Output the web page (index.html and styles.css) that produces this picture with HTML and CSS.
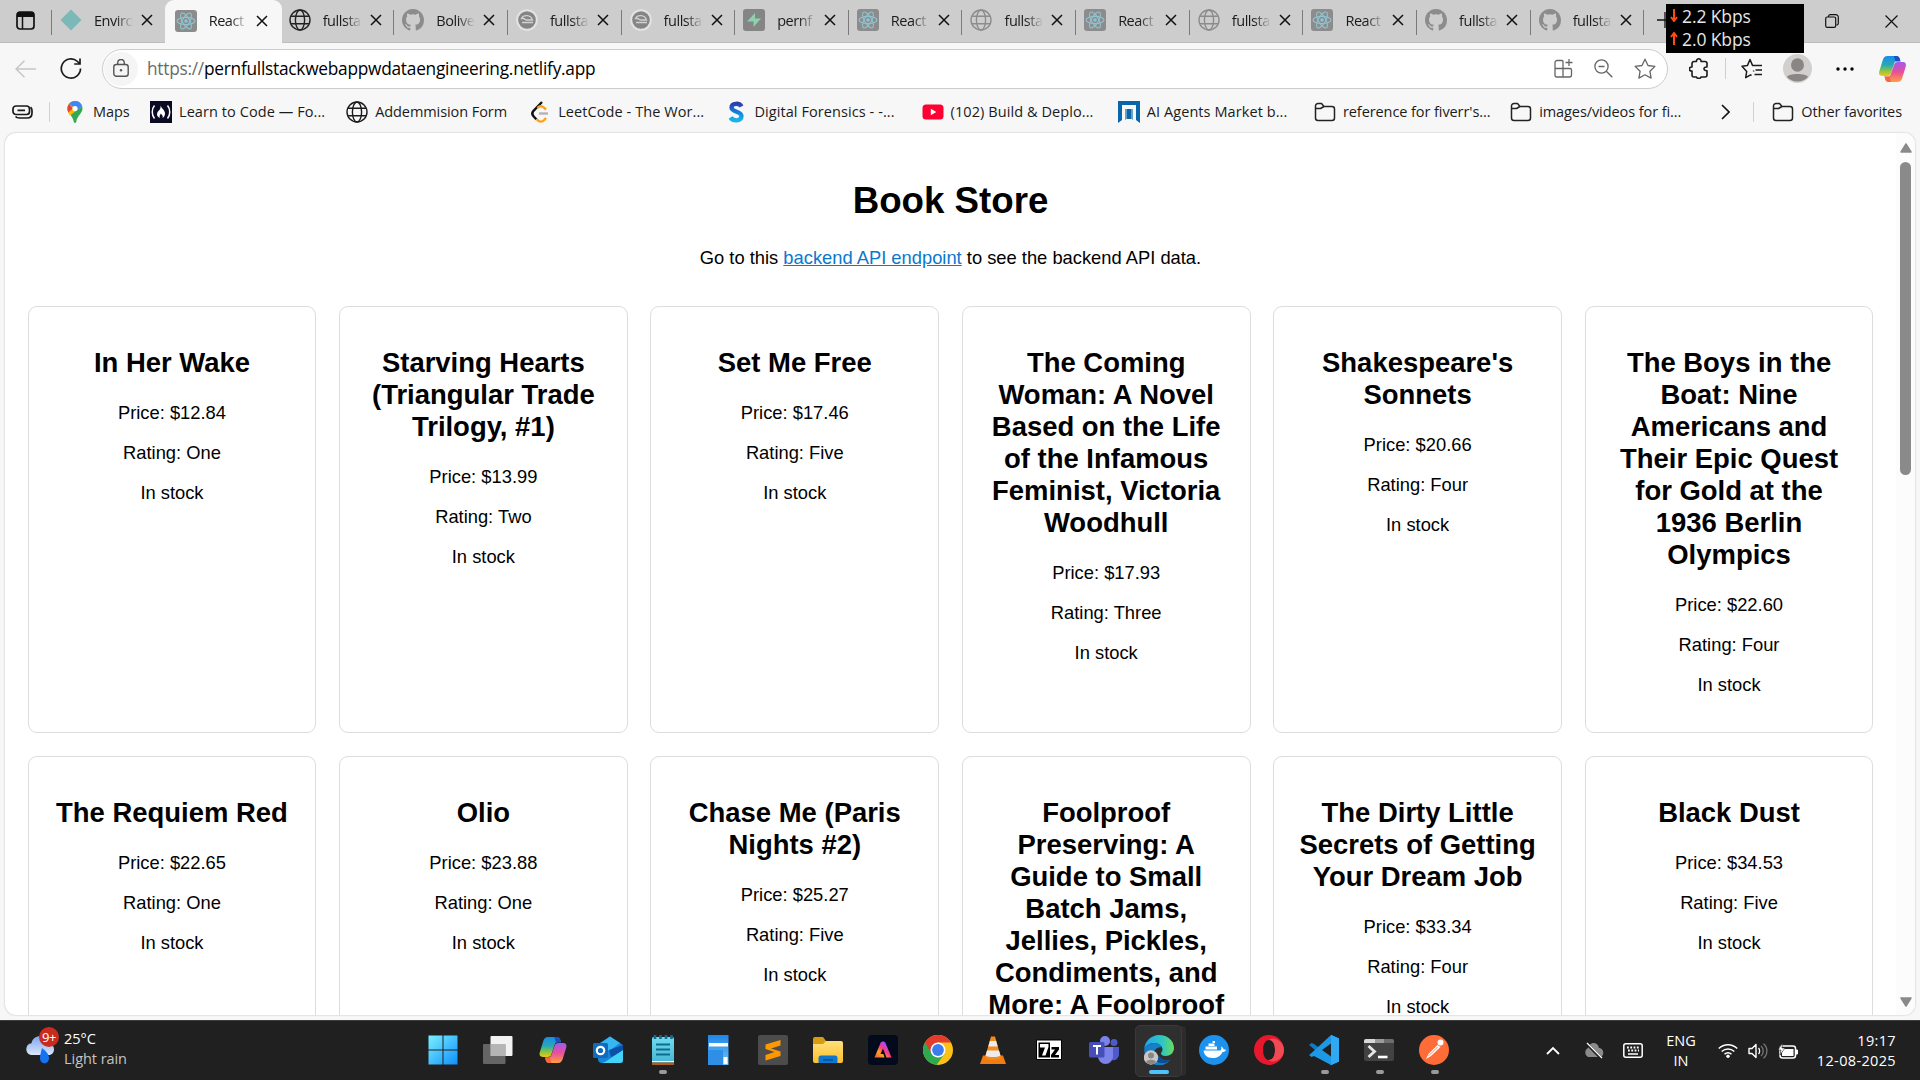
FILE: index.html
```html
<!DOCTYPE html>
<html lang="en">
<head>
<meta charset="utf-8">
<title>React App</title>
<link rel="stylesheet" href="styles.css">
</head>
<body>
<svg class="defs" width="0" height="0" aria-hidden="true">
  <defs>
    <linearGradient id="cpA" x1="0" y1="0" x2="0" y2="1"><stop offset="0" stop-color="#1a8bea"/><stop offset=".45" stop-color="#27a9b5"/><stop offset=".75" stop-color="#8cc63f"/><stop offset="1" stop-color="#f5c518"/></linearGradient>
    <linearGradient id="cpB" x1="0" y1="0" x2="0" y2="1"><stop offset="0" stop-color="#a259f0"/><stop offset=".5" stop-color="#e84f9a"/><stop offset="1" stop-color="#ffa03c"/></linearGradient>
    <linearGradient id="win" x1="0" y1="0" x2="1" y2="1"><stop offset="0" stop-color="#7af0ff"/><stop offset="1" stop-color="#0f8ffb"/></linearGradient>
    <linearGradient id="cloud" x1="0" y1="0" x2="0" y2="1"><stop offset="0" stop-color="#7fa6ec"/><stop offset="1" stop-color="#dbe6fa"/></linearGradient>
    <linearGradient id="sg" x1="0" y1="0" x2="0" y2="1"><stop offset="0" stop-color="#2b3fae"/><stop offset=".6" stop-color="#0d8ee0"/><stop offset="1" stop-color="#1bb4ea"/></linearGradient>
    <linearGradient id="fold" x1="0" y1="0" x2="0" y2="1"><stop offset="0" stop-color="#ffe07a"/><stop offset="1" stop-color="#fdbf2d"/></linearGradient>
    <linearGradient id="edgeA" x1="0" y1="0" x2="1" y2="0"><stop offset="0" stop-color="#24a3ee"/><stop offset=".6" stop-color="#2ec6c4"/><stop offset="1" stop-color="#6bdc5a"/></linearGradient>
    <linearGradient id="adobe" x1="0" y1="1" x2="1" y2="0"><stop offset="0" stop-color="#ff4a3d"/><stop offset=".3" stop-color="#f2a51f"/><stop offset=".5" stop-color="#ff3d7a"/><stop offset=".75" stop-color="#a04bff"/><stop offset="1" stop-color="#1fb5ff"/></linearGradient>
    <linearGradient id="calc" x1="0" y1="0" x2="0" y2="1"><stop offset="0" stop-color="#1f86e8"/><stop offset="1" stop-color="#6cc4fa"/></linearGradient>
    <linearGradient id="note" x1="0" y1="0" x2="0" y2="1"><stop offset="0" stop-color="#70dbf0"/><stop offset="1" stop-color="#43b3d3"/></linearGradient>
    <symbol id="react" viewBox="0 0 22 22"><rect width="22" height="22" rx="3" fill="#8c8c8c"/><g fill="none" stroke="#8fc3d0" stroke-width="1.1"><ellipse cx="11" cy="11" rx="9" ry="3.6"/><ellipse cx="11" cy="11" rx="9" ry="3.6" transform="rotate(60 11 11)"/><ellipse cx="11" cy="11" rx="9" ry="3.6" transform="rotate(120 11 11)"/></g><circle cx="11" cy="11" r="1.8" fill="#8fc3d0"/></symbol>
    <symbol id="globe" viewBox="0 0 22 22"><g fill="none" stroke="currentColor" stroke-width="1.4"><circle cx="11" cy="11" r="10"/><ellipse cx="11" cy="11" rx="4.6" ry="10"/><path d="M2 7.3h18M2 14.7h18"/></g></symbol>
    <symbol id="github" viewBox="0 0 16 16"><path fill="#8c8c8c" d="M8 0C3.58 0 0 3.58 0 8c0 3.54 2.29 6.53 5.47 7.59.4.07.55-.17.55-.38 0-.19-.01-.82-.01-1.49-2.01.37-2.53-.49-2.69-.94-.09-.23-.48-.94-.82-1.13-.28-.15-.68-.52-.01-.53.63-.01 1.08.58 1.23.82.72 1.21 1.87.87 2.33.66.07-.52.28-.87.51-1.07-1.78-.2-3.64-.89-3.64-3.95 0-.87.31-1.59.82-2.15-.08-.2-.36-1.02.08-2.12 0 0 .67-.21 2.2.82a7.6 7.6 0 0 1 4 0c1.53-1.04 2.2-.82 2.2-.82.44 1.1.16 1.92.08 2.12.51.56.82 1.27.82 2.15 0 3.07-1.87 3.75-3.65 3.95.29.25.54.73.54 1.48 0 1.07-.01 1.93-.01 2.2 0 .21.15.46.55.38A8 8 0 0 0 16 8c0-4.42-3.58-8-8-8"/></symbol>
    <symbol id="koyeb" viewBox="0 0 22 22"><circle cx="11" cy="11" r="9.800" fill="#858585" stroke="#e3e3e3" stroke-width="2"/><path d="M5.500 9.500c2-4 9-4 11 1.500h-6c-1.500 0-1.500-1.500-3-1.500zM6 13.500h11" stroke="#d2d2d2" stroke-width="1.300" fill="none"/></symbol>
    <symbol id="close" viewBox="0 0 12 12"><path d="M1 1l10 10M11 1L1 11" stroke="#111" stroke-width="1.5" fill="none"/></symbol>
    <symbol id="folder" viewBox="0 0 22 20"><path d="M1.5 5V4a2.5 2.5 0 0 1 2.500-2.500h3.500l2.500 3h8a2.500 2.500 0 0 1 2.500 2.500v9a2.500 2.500 0 0 1-2.500 2.500H4A2.500 2.500 0 0 1 1.500 16zM1.500 6.500h5L10 4.500" fill="none" stroke="#222" stroke-width="1.5" stroke-linejoin="round"/></symbol>
    <symbol id="copilot" viewBox="0 0 28 28"><path d="M9 1h9c2 0 2.800 1.400 3.300 3l.6 2h-3c-2 0-2.800 1-3.400 3l-3 9c-.8 2.400-1.800 3-4 3H4C1 21 0 19 .8 16.300L4.300 5C5.200 2.300 6.500 1 9 1z" fill="url(#cpA)"/><path d="M15 1h3c2 0 2.800 1.400 3.300 3l.7 2.500h-4c-2 0-2-5.500-3-5.500z" fill="#1c50c8"/><path d="M19 27h-9c-2 0-2.800-1.400-3.300-3L6 21.500h3c2 0 2.900-1 3.500-3l3-8.500c.8-2.400 1.800-3 4-3H24c3 0 4 2 3.200 4.700L23.700 23c-.9 2.700-2.200 4-4.700 4z" fill="url(#cpB)"/><path d="M13 27h-3c-2 0-2.800-1.400-3.300-3L6 21.500h4c2 0 2 5.500 3 5.500z" fill="#f26b3a"/></symbol>
  </defs>
</svg>

<div class="tabstrip">
  <div class="tab-actions"><svg width="19" height="19" viewBox="0 0 19 19"><rect x="1" y="1" width="17" height="17" rx="3" fill="none" stroke="#111" stroke-width="1.7"/><path d="M1 4a3 3 0 0 1 3-3h11a3 3 0 0 1 3 3v2H1z" fill="#111"/><path d="M6.500 6v12" stroke="#111" stroke-width="1.5"/></svg></div>
  <div class="tab sep"><svg class="fav" viewBox="0 0 22 22"><path d="M11 .5L21.500 11 11 21.500.5 11z" fill="#7cb8b8"/></svg><span class="tab-title">Enviro</span><svg class="x"><use href="#close"/></svg></div>
  <div class="tab active"><svg class="fav"><use href="#react"/></svg><span class="tab-title">React</span><svg class="x"><use href="#close"/></svg></div>
  <div class="tab dark"><svg class="fav"><use href="#globe"/></svg><span class="tab-title">fullsta</span><svg class="x"><use href="#close"/></svg></div>
  <div class="tab sep"><svg class="fav"><use href="#github"/></svg><span class="tab-title">Bolive</span><svg class="x"><use href="#close"/></svg></div>
  <div class="tab sep"><svg class="fav"><use href="#koyeb"/></svg><span class="tab-title">fullsta</span><svg class="x"><use href="#close"/></svg></div>
  <div class="tab sep"><svg class="fav"><use href="#koyeb"/></svg><span class="tab-title">fullsta</span><svg class="x"><use href="#close"/></svg></div>
  <div class="tab sep"><svg class="fav" viewBox="0 0 22 22"><rect width="22" height="22" rx="3" fill="#858585"/><path d="M12 4v5.500h6L10.500 18v-5.500H4z" fill="#8fd0ae"/></svg><span class="tab-title">pernf</span><svg class="x"><use href="#close"/></svg></div>
  <div class="tab sep"><svg class="fav"><use href="#react"/></svg><span class="tab-title">React</span><svg class="x"><use href="#close"/></svg></div>
  <div class="tab sep"><svg class="fav"><use href="#globe"/></svg><span class="tab-title">fullsta</span><svg class="x"><use href="#close"/></svg></div>
  <div class="tab sep"><svg class="fav"><use href="#react"/></svg><span class="tab-title">React</span><svg class="x"><use href="#close"/></svg></div>
  <div class="tab sep"><svg class="fav"><use href="#globe"/></svg><span class="tab-title">fullsta</span><svg class="x"><use href="#close"/></svg></div>
  <div class="tab sep"><svg class="fav"><use href="#react"/></svg><span class="tab-title">React</span><svg class="x"><use href="#close"/></svg></div>
  <div class="tab sep"><svg class="fav"><use href="#github"/></svg><span class="tab-title">fullsta</span><svg class="x"><use href="#close"/></svg></div>
  <div class="tab sep"><svg class="fav"><use href="#github"/></svg><span class="tab-title">fullsta</span><svg class="x"><use href="#close"/></svg></div>
  <div class="new-tab sep"><svg width="16" height="16" viewBox="0 0 16 16"><path d="M0 8h16M8 0v16" stroke="#111" stroke-width="1.3"/></svg></div>
  <div class="window-buttons">
    <svg width="14" height="14" viewBox="0 0 14 14"><path d="M3.500 3V2.500A2 2 0 0 1 5.500.7h5.300a2.500 2.500 0 0 1 2.500 2.500v6a2 2 0 0 1-1.800 2" fill="none" stroke="#111" stroke-width="1.2"/><rect x=".7" y="3" width="10" height="10.300" rx="1.600" fill="none" stroke="#111" stroke-width="1.2"/></svg>
    <svg width="13" height="13" viewBox="0 0 13 13"><path d="M.5.500l12 12M12.500.500l-12 12" stroke="#111" stroke-width="1.2"/></svg>
  </div>
</div>

<div class="netmeter">
  <div><svg width="8" height="13" viewBox="0 0 8 13"><path d="M4 0v11M1 8l3 4 3-4" fill="none" stroke="#ff4a10" stroke-width="2"/></svg><span>2.2 Kbps</span></div>
  <div><svg width="8" height="13" viewBox="0 0 8 13"><path d="M4 13V2M1 5l3-4 3 4" fill="none" stroke="#ff4a10" stroke-width="2"/></svg><span>2.0 Kbps</span></div>
</div>

<div class="toolbar">
  <svg class="back" width="21" height="18" viewBox="0 0 21 18"><path d="M9.500.7L1 9l8.500 8.300M1 9h20" fill="none" stroke="#c6c6c6" stroke-width="1.5"/></svg>
  <svg class="reload" width="22" height="21" viewBox="0 0 22 21"><path d="M20.500 10.500A9.600 9.600 0 1 1 17.500 3.500L20 6M20 .5V6h-5.800" fill="none" stroke="#1b1b1b" stroke-width="1.7"/></svg>
  <div class="address">
    <span class="lock"><svg width="16" height="18" viewBox="0 0 16 18"><rect x=".8" y="5.500" width="14.400" height="11.700" rx="2.500" fill="none" stroke="#555" stroke-width="1.400"/><path d="M4.700 5.500V3.800a3.300 3.300 0 0 1 6.600 0v1.700" fill="none" stroke="#555" stroke-width="1.400"/><circle cx="8" cy="11.300" r="1.200" fill="#555"/></svg></span>
    <span class="url"><span>https://</span>pernfullstackwebappwdataengineering.netlify.app</span>
    <svg width="19" height="19" viewBox="0 0 19 19"><path d="M8 1.500H3A2 2 0 0 0 1 3.500V16a2 2 0 0 0 2 2h12.500a2 2 0 0 0 2-2v-5a1.500 1.500 0 0 0-1.500-1.500H1M9 2v16M9 2.500a1 1 0 0 0-1-1M15 0v7M11.500 3.500h7" fill="none" stroke="#666" stroke-width="1.300"/></svg>
    <svg width="19" height="19" viewBox="0 0 19 19"><circle cx="7.500" cy="7.500" r="6.600" fill="none" stroke="#666" stroke-width="1.300"/><path d="M12.300 12.300l6 6M4.500 7.500h6" stroke="#666" stroke-width="1.400"/></svg>
    <svg width="22" height="21" viewBox="0 0 22 21"><path d="M11 1.200l3 6.300 6.900.9-5 4.800 1.200 6.900L11 16.800l-6.100 3.300 1.200-6.900-5-4.800 6.900-.9z" fill="none" stroke="#666" stroke-width="1.300" stroke-linejoin="round"/></svg>
  </div>
  <svg class="ext" width="20" height="21" viewBox="0 0 20 21"><path d="M5 3.500h2.500c-.4-3.600 4.900-3.600 4.500 0H16a2 2 0 0 1 2 2V9c-4-.4-4 4 0 3.800V17a2 2 0 0 1-2 2h-4c0 1.800-4.500 1.800-4.500 0H5a2 2 0 0 1-2-2v-4C-.5 13-.5 9 3 9V5.500a2 2 0 0 1 2-2z" fill="none" stroke="#1b1b1b" stroke-width="1.600" stroke-linejoin="round"/></svg>
  <i class="vline"></i>
  <svg class="favs" width="22" height="21" viewBox="0 0 22 21"><path d="M12.500 13.500l.2-1M10.500 17.500l-1-.6-4.800 2.800 1-6.200L1 8.300l5.500-.9L9 1.500l2.500 5.900H21M14.500 12h6.500M13.500 16.500H21" fill="none" stroke="#1b1b1b" stroke-width="1.500" stroke-linejoin="round"/></svg>
  <svg class="avatar" width="29" height="29" viewBox="0 0 29 29"><circle cx="14.500" cy="14.500" r="14.500" fill="#d2d0ce"/><ellipse cx="14.500" cy="11" rx="6.500" ry="6.800" fill="#8a8683"/><path d="M4 23c1-4 20-4 21 0a14.400 14.400 0 0 1-21 0z" fill="#8a8683"/></svg>
  <svg class="more" width="18" height="4" viewBox="0 0 18 4"><circle cx="2" cy="2" r="1.700"/><circle cx="9" cy="2" r="1.700"/><circle cx="16" cy="2" r="1.700"/></svg>
  <svg class="copilot" width="29" height="28"><use href="#copilot"/></svg>
</div>

<div class="bookmarks">
  <div class="bm-first"><svg width="21" height="14" viewBox="0 0 21 14"><path d="M4 1h10.500a3 3 0 0 1 3 3v2.500a3 3 0 0 1-3 3H4a3 3 0 0 1-3-3V4a3 3 0 0 1 3-3zM5.500 5.300h7.500M3.500 11.500c1 1.300 2 1.500 4 1.500H15c3.500 0 5-2 5-5V5.500c0-1.500-.5-2.500-1.500-3.300" fill="none" stroke="#1b1b1b" stroke-width="1.700"/></svg></div>
  <div class="bm maps"><svg class="bi" viewBox="0 0 22 22"><path d="M11 0a7.500 7.500 0 0 1 7.500 7.500c0 5-5.500 7-6.300 13.600-.2 1.200-2.200 1.200-2.400 0C9 14.500 3.500 12.500 3.500 7.500A7.500 7.500 0 0 1 11 0z" fill="#34a853"/><path d="M11 0a7.500 7.500 0 0 1 7.100 5.200L6 14.500c-1.500-2-2.500-4-2.500-7A7.500 7.500 0 0 1 11 0z" fill="#fbbc04"/><path d="M5.200 2.800L9 7.500l-4.700 4C2.800 8.500 3.300 5 5.200 2.800z" fill="#ea4335"/><path d="M5.200 2.800C8.500-1.500 16.500-.8 18.100 5.200L13 9z" fill="#4285f4"/><circle cx="11" cy="7.500" r="2.600" fill="#fff"/></svg><span>Maps</span></div>
  <div class="bm cut"><svg class="bi" viewBox="0 0 22 22"><rect width="22" height="22" fill="#0a0a23"/><path d="M4.500 4.500C1.500 8 1.500 14 4.500 17.500M17.500 4.500c3 3.500 3 9.500 0 13" fill="none" stroke="#fff" stroke-width="1.500"/><path d="M10.500 4.500c1 3 4.500 4.500 4.500 8 0 2-1 3.500-2.500 4.500 1-2.500-1-3-1.500-4.500-1 1.500-2 2.500-1 4.500C6 15.500 6.500 11.500 9 9.500c1.500-1.500 1.700-3 1.500-5z" fill="#fff"/></svg><span>Learn to Code — Fo...</span></div>
  <div class="bm globe"><svg class="bi"><use href="#globe"/></svg><span>Addemmision Form</span></div>
  <div class="bm cut"><svg class="bi" viewBox="0 0 22 22"><path d="M13 1L4.500 9.800c-1.800 2-1.800 3.500 0 5.500l3 3.200" fill="none" stroke="#111" stroke-width="2.400"/><path d="M8.500 7c2-2.200 4.500-2.300 6.500-.3l2 1.800M7.500 18c2.500 3.300 5.500 3.300 7.700 1l1.800-2" fill="none" stroke="#ffa116" stroke-width="2.400"/><path d="M10 12.500h9" stroke="#b3b3b3" stroke-width="2.400"/></svg><span>LeetCode - The Wor...</span></div>
  <div class="bm cut"><svg class="bi" viewBox="0 0 22 22"><path d="M16.500 5.500C14.500 1.500 6.500 2 6.500 6.500c0 5 10 3.500 10 8.500 0 5.500-8.500 5.500-11 1.500" fill="none" stroke="url(#sg)" stroke-width="4.300"/></svg><span>Digital Forensics - -...</span></div>
  <div class="bm cut"><svg class="bi" viewBox="0 0 22 22"><rect x=".5" y="3.500" width="21" height="15" rx="3.500" fill="#ff0033"/><path d="M8.800 7.800v6.400l5.500-3.200z" fill="#fff"/></svg><span>(102) Build &amp; Deplo...</span></div>
  <div class="bm cut"><svg class="bi" viewBox="0 0 22 22"><path d="M0 0h22v22l-4-3V4H4v15l-4 3zM9 8h4v10H9z" fill="#0a66a8"/><path d="M7 19V8h3v9zM12 8h3v11l-3-2z" fill="#0a66a8" opacity=".6"/></svg><span>AI Agents Market b...</span></div>
  <div class="bm"><svg class="bi"><use href="#folder"/></svg><span>reference for fiverr's...</span></div>
  <div class="bm"><svg class="bi"><use href="#folder"/></svg><span>images/videos for fi...</span></div>
  <div class="bm-more"><svg width="9" height="16" viewBox="0 0 9 16"><path d="M1 1l7 7-7 7" fill="none" stroke="#111" stroke-width="1.600"/></svg></div>
  <div class="bm other"><svg class="bi"><use href="#folder"/></svg><span>Other favorites</span></div>
</div>

<div class="frame">
  <main class="page">
    <h1>Book Store</h1>
    <p class="intro">Go to this <a href="#">backend API endpoint</a> to see the backend API data.</p>
    <div class="grid">
      <article class="card"><h2>In Her Wake</h2><p>Price: $12.84</p><p>Rating: One</p><p>In stock</p></article>
      <article class="card"><h2>Starving Hearts (Triangular Trade Trilogy, #1)</h2><p>Price: $13.99</p><p>Rating: Two</p><p>In stock</p></article>
      <article class="card"><h2>Set Me Free</h2><p>Price: $17.46</p><p>Rating: Five</p><p>In stock</p></article>
      <article class="card"><h2>The Coming Woman: A Novel Based on the Life of the Infamous Feminist, Victoria Woodhull</h2><p>Price: $17.93</p><p>Rating: Three</p><p>In stock</p></article>
      <article class="card"><h2>Shakespeare's Sonnets</h2><p>Price: $20.66</p><p>Rating: Four</p><p>In stock</p></article>
      <article class="card"><h2>The Boys in the Boat: Nine Americans and Their Epic Quest for Gold at the 1936 Berlin Olympics</h2><p>Price: $22.60</p><p>Rating: Four</p><p>In stock</p></article>
      <article class="card"><h2>The Requiem Red</h2><p>Price: $22.65</p><p>Rating: One</p><p>In stock</p></article>
      <article class="card"><h2>Olio</h2><p>Price: $23.88</p><p>Rating: One</p><p>In stock</p></article>
      <article class="card"><h2>Chase Me (Paris Nights #2)</h2><p>Price: $25.27</p><p>Rating: Five</p><p>In stock</p></article>
      <article class="card"><h2>Foolproof Preserving: A Guide to Small Batch Jams, Jellies, Pickles, Condiments, and More: A Foolproof</h2></article>
      <article class="card"><h2>The Dirty Little Secrets of Getting Your Dream Job</h2><p>Price: $33.34</p><p>Rating: Four</p><p>In stock</p></article>
      <article class="card"><h2>Black Dust</h2><p>Price: $34.53</p><p>Rating: Five</p><p>In stock</p></article>
    </div>
  </main>
  <div class="scrollbar">
    <svg width="12" height="10" viewBox="0 0 12 10"><path d="M6 1l5 8H1z" fill="#8a8a8a" stroke="#8a8a8a" stroke-width="1.500" stroke-linejoin="round"/></svg>
    <i class="thumb"></i>
    <svg class="down" width="12" height="10" viewBox="0 0 12 10"><path d="M6 9L1 1h10z" fill="#8a8a8a" stroke="#8a8a8a" stroke-width="1.500" stroke-linejoin="round"/></svg>
  </div>
</div>

<footer class="taskbar">
  <div class="weather">
    <div class="weather-icon"><svg width="32" height="30" viewBox="0 0 32 30"><path d="M7 20a6 6 0 0 1 .5-11.800C9-1 22-1 24 8c8 1 8 12 0 12z" fill="url(#cloud)"/><path d="M18 13c4 3 7 6.500 7 10 0 7-9 7-9 0 0-3 1-6 2-10z" fill="#1673f0"/></svg><span class="badge">9+</span></div>
    <div class="weather-text"><span>25°C</span><span class="dim">Light rain</span></div>
  </div>
  <div class="apps">
    <div class="app"><svg viewBox="0 0 30 30"><path d="M.5.500h14v14H.500zM15.500.500h14v14h-14zM.500 15.500h14v14H.500zM15.500 15.500h14v14h-14z" fill="url(#win)"/></svg></div>
    <div class="app"><svg viewBox="0 0 30 30"><rect x="7.500" y="1" width="22" height="20" rx="1" fill="#f2f2f2"/><rect y="9" width="22.500" height="20" rx="1" fill="#777" opacity=".8"/><rect x="7.500" y="9" width="15" height="12" fill="#b5b5b5"/></svg></div>
    <div class="app"><svg viewBox="0 0 30 30"><use href="#copilot" x="1" y="1" width="28" height="28"/></svg></div>
    <div class="app"><svg viewBox="0 0 30 30"><path d="M5 9L17 1.500 30 10v15a3 3 0 0 1-3 3H9a4 4 0 0 1-4-4z" fill="#1683d8"/><path d="M8 8l9-6.500L27 8 16 16z" fill="#35b8f1"/><path d="M16 15l14-5v6l-12 6z" fill="#0c4fa6"/><path d="M12 27l18-12v10a3 3 0 0 1-3 3H9z" fill="#43d3f7"/><rect y="8" width="15" height="15" rx="1.500" fill="#0f6cbd"/><circle cx="7.500" cy="15.500" r="3.700" fill="none" stroke="#fff" stroke-width="2.200"/></svg></div>
    <div class="app run"><svg viewBox="0 0 30 30"><rect x="4" y="2" width="22" height="28" rx="1.500" fill="url(#note)"/><path d="M4 26h22v1H4z" fill="#fff"/><path d="M4 27.500h22V29a1 1 0 0 1-1 1H5a1 1 0 0 1-1-1z" fill="#b45a1b"/><path d="M8 9.500h14M8 14.500h14M8 19.500h14" stroke="#0e6c8c" stroke-width="1.800"/><path d="M7 0v4M12.500 0v4M18 0v4M23.500 0v4" stroke="#0e6c8c" stroke-width="2.600"/></svg></div>
    <div class="app"><svg viewBox="0 0 30 30"><rect x="5" width="20.500" height="30" fill="url(#calc)"/><path d="M5 15h15v15H5z" fill="#2f8fe6"/><path d="M6 8h19v3.500H6zM20.500 22h4v7h-4z" fill="#fff"/></svg></div>
    <div class="app"><svg viewBox="0 0 30 30"><rect width="30" height="30" rx="2" fill="#4c4c4c"/><path d="M22.500 5v5.500L13 13.500l9.500 3V21l-15 4.500V20l9-3-9-3V9.500z" fill="#ff9800"/></svg></div>
    <div class="app"><svg viewBox="0 0 30 30"><path d="M0 4a2 2 0 0 1 2-2h8l3 4h8v7H0z" fill="#d89c12"/><path d="M0 9h10l3-3h15a2 2 0 0 1 2 2v18a2 2 0 0 1-2 2H2a2 2 0 0 1-2-2z" fill="url(#fold)"/><path d="M5.500 28v-5a2.500 2.500 0 0 1 2.500-2.500h14a2.500 2.500 0 0 1 2.500 2.500v5z" fill="#1077cf"/><path d="M10 25h10" stroke="#07549b" stroke-width="1.600"/></svg></div>
    <div class="app"><svg viewBox="0 0 30 30"><rect width="30" height="30" rx="4" fill="#030a1c"/><path d="M6.500 22.500L12.500 8c1-2 4-2 5 0l6 14.500h-5L15 13.500l-2.500 5.500h3l1 3.500z" fill="url(#adobe)"/></svg></div>
    <div class="app"><svg viewBox="0 0 30 30"><circle cx="15" cy="15" r="15" fill="#fbc116"/><path d="M15 15L2 7.500A15 15 0 0 0 13.500 29.900L21.500 18.700z" fill="#2da94f"/><path d="M2 7.500a15 15 0 0 1 26 0H15l-6.500 11z" fill="#e33b2e"/><circle cx="15" cy="15" r="7.500" fill="#fff"/><circle cx="15" cy="15" r="5.900" fill="#3b7ded"/></svg></div>
    <div class="app"><svg viewBox="0 0 30 30"><path d="M5 20.500h20l3 8.500H2z" fill="#f07c12"/><path d="M13 1.500h4l6 21c-2 3-14 3-16 0z" fill="#f58a1f"/><path d="M11.900 6h6.200l1.600 5.500h-9.400zM9 15.500h12l1.500 5c-3 2-12 2-15 0z" fill="#ececec"/></svg></div>
    <div class="app"><svg viewBox="0 0 30 30"><path d="M2.500 5h25v19.500h-25z" fill="#fff" stroke="#000" stroke-width="1"/><rect x="4.500" y="7.500" width="11.500" height="15" fill="#000"/><path d="M6 9h8.500v3l-3 8.500H8l3-8H6z" fill="#fff"/><path d="M17.500 12h7.500v2.500l-4 5.500h4v2.500h-8V20l4-5.500h-3.500z" fill="#000"/></svg></div>
    <div class="app"><svg viewBox="0 0 30 30"><circle cx="16" cy="6" r="5" fill="#7b83eb"/><circle cx="25" cy="7.500" r="3.500" fill="#5059c9"/><path d="M19 12h11v7a6 6 0 0 1-8 6z" fill="#5059c9"/><path d="M9 12h15v9.500a7 7 0 0 1-15 0z" fill="#7b83eb"/><rect y="7" width="15.500" height="15.500" rx="1.500" fill="#464eb8"/><path d="M4 11h8M8 11v8.500" stroke="#fff" stroke-width="2"/></svg></div>
    <div class="app current"><svg viewBox="0 0 30 30"><path d="M15 0c9 0 15 6 15 13 0 5-4 8-8.500 8-3 0-4.500-1.500-4.500-2.500s1.500-2 1.500-4C18.500 11 15 8 10 8 5 8 1 11 .2 14.500.500 6.500 7 0 15 0z" fill="url(#edgeA)"/><path d="M.2 15C1 11 5 8 10 8c3.500 0 6.500 1.500 7.800 4C12 12 9.500 16 9.500 19.500c0 5 4.500 8.500 9 8.500 3.500 0 6.500-1.500 8.500-3.500A15 15 0 0 1 .2 15z" fill="#1480cc"/><path d="M10 20c.5 5 5 8 9 8 3.500 0 6-1.500 8-3.500-4 1-9.500.5-12-4z" fill="#0d4f94"/><circle cx="7" cy="22.500" r="7.200" fill="#c9c6c3"/><circle cx="7" cy="20.500" r="3" fill="#8a8683"/><path d="M2 27c1-3 9-3 10 0-2 3-8 3-10 0z" fill="#8a8683"/></svg></div>
    <div class="app"><svg viewBox="0 0 30 30"><circle cx="15" cy="15" r="15" fill="#1d91ee"/><path d="M4.500 15.500h17c1-1 1-2.500.5-4 1.500.5 2.500 1.500 2.500 3 1 0 2 0 2.500.5-.5 1.500-2 2-3.500 2-2 4-5 6-10 6-5.500 0-8.500-3-9-7.500z" fill="#fff"/><path d="M6.500 14.500v-3H18v3zM9.500 11V8.500h6V11zM13.500 8V6H16v2z" fill="#fff"/></svg></div>
    <div class="app"><svg viewBox="0 0 30 30"><path fill-rule="evenodd" d="M15 0a15 15 0 1 0 0 30 15 15 0 0 0 0-30zm0 5c3.800 0 6 4.500 6 10s-2.200 10-6 10-6-4.500-6-10 2.200-10 6-10z" fill="#e8182c"/><path d="M15 25c3.800 0 6-4.500 6-10S18.800 5 15 5c3-4 15 0 15 10S18 29 15 25z" fill="#f24a55"/></svg></div>
    <div class="app run"><svg viewBox="0 0 30 30"><path d="M22 0l8 3.500v23L22 30 2 11.500 0 10l2.500-2L5 9l17 12.500z" fill="#0e7bc7"/><path d="M22 0l8 3.500v23L22 30 5 21l-2.500 1L0 20l2-1.500z" fill="#1c98e6"/><path d="M22 8.500v13L13 15z" fill="#202020"/><path d="M22 0l8 3.500v23L22 30z" fill="#2faaf2"/></svg></div>
    <div class="app run"><svg viewBox="0 0 30 30"><rect y="4" width="30" height="22" rx="2" fill="#424242"/><path d="M0 8V6a2 2 0 0 1 2-2h9v4z" fill="#d7d7d7"/><path d="M11 4h9v4h-9z" fill="#9a9a9a"/><path d="M20 4h8a2 2 0 0 1 2 2v2H20z" fill="#6d6d6d"/><path d="M4.500 11l6 5.500-6 5.500" fill="none" stroke="#e6e6e6" stroke-width="2.800"/><path d="M14 22h9.500" stroke="#fff" stroke-width="2.600"/></svg></div>
    <div class="app run"><svg viewBox="0 0 30 30"><circle cx="15" cy="15" r="15" fill="#ff6c37"/><path d="M7 24l2.500-5 9-9 3 2-9.500 9z" fill="#fff"/><circle cx="21.500" cy="7.500" r="3" fill="#fff"/><path d="M9.500 21l9-9" stroke="#ff6c37" stroke-width=".8"/></svg></div>
  </div>
  <div class="tray">
    <svg width="14" height="9" viewBox="0 0 14 9"><path d="M1 8l6-6 6 6" fill="none" stroke="#fff" stroke-width="1.800"/></svg>
    <svg class="t-cloud" width="21" height="17" viewBox="0 0 21 17"><path d="M5 15a5 5 0 0 1 0-9C7-1 15 0 16 6c5 0 6 8 1 9z" fill="#8b8b8b"/><path d="M3 1l15 15" stroke="#202020" stroke-width="3"/><path d="M4 1l15 15" stroke="#fff" stroke-width="1.300"/></svg>
    <svg class="t-key" width="20" height="15" viewBox="0 0 20 15"><rect x=".8" y=".8" width="18.400" height="13.400" rx="2" fill="none" stroke="#fff" stroke-width="1.500"/><path d="M4 4.500h12M5 7.500h11" stroke="#fff" stroke-width="1.800" stroke-dasharray="1.800 1.500"/><path d="M5 11h10" stroke="#fff" stroke-width="1.500"/></svg>
    <div class="lang"><span>ENG</span><span>IN</span></div>
    <svg class="t-wifi" width="20" height="15" viewBox="0 0 20 15"><g fill="none" stroke="#fff" stroke-width="1.500"><path d="M.8 5.500a13 13 0 0 1 18.400 0M3.700 8.500a9 9 0 0 1 12.600 0M6.500 11.300a5 5 0 0 1 7 0"/></g><circle cx="10" cy="13.200" r="1.700" fill="#fff"/></svg>
    <svg class="t-vol" width="20" height="16" viewBox="0 0 20 16"><path d="M1 5.500h3l4-4v13l-4-4H1z" fill="none" stroke="#fff" stroke-width="1.400" stroke-linejoin="round"/><path d="M10.500 5c1.500 1.500 1.500 4.500 0 6" fill="none" stroke="#fff" stroke-width="1.300"/><path d="M13 3c3 2.500 3 7.500 0 10M15.500.8c4.500 3.500 4.500 11 0 14.400" fill="none" stroke="#777" stroke-width="1.300"/></svg>
    <svg class="t-bat" width="21" height="16" viewBox="0 0 21 16"><rect x="2" y="3" width="15.500" height="12" rx="2.500" fill="none" stroke="#fff" stroke-width="1.500"/><rect x="4" y="6" width="11.500" height="7" fill="#fff"/><path d="M18 7h1.500v4H18z" fill="#fff" stroke="#fff"/><path d="M4.500 0L0 7h3l-1 5 5-7H4z" fill="#fff" stroke="#202020" stroke-width=".6"/></svg>
    <div class="clock"><span>19:17</span><span>12-08-2025</span></div>
  </div>
</footer>
</body>
</html>
```
FILE: styles.css
```css
* { box-sizing: border-box; }
body {
  margin: 0;
  width: 1920px;
  height: 1080px;
  overflow: hidden;
  display: flex;
  flex-direction: column;
  background: #f7f7f7;
  font-family: "Open Sans", "Noto Sans", sans-serif;
  font-size: 15px;
  color: #1b1b1b;
}
svg { flex: none; display: block; }
.defs { position: absolute; }

/* tab strip */
.tabstrip {
  flex: none;
  height: 43px;
  display: flex;
  background: #cdcdcd;
  border-bottom: 1px solid #bdbdbd;
}
.tab-actions { width: 51px; padding: 11px 0 0 16px; }
.tab {
  width: 113.65px;
  display: flex;
  align-items: center;
  padding: 0 0 2px 9px;
  color: #8c8c8c;
}
.tab.dark { color: #222; }
.sep { background: linear-gradient(#7a7a7a, #7a7a7a) 0 10px / 1px 25px no-repeat; }
.tab.active {
  width: 117px;
  height: 43px;
  margin-right: -2px;
  background: #f7f7f7;
  border-radius: 9px 9px 0 0;
  padding-left: 10px;
}
.fav { width: 22px; height: 22px; }
.tab-title {
  width: 39px;
  margin-left: 12px;
  white-space: nowrap;
  font-size: 14.5px;
  letter-spacing: -0.45px;
  color: #1b1b1b;
  -webkit-mask-image: linear-gradient(90deg, #000 55%, transparent);
  mask-image: linear-gradient(90deg, #000 55%, transparent);
}
.x { width: 12px; height: 12px; margin-left: 8px; }
.new-tab { width: 40px; padding: 12px 0 0 14px; }
.window-buttons {
  margin-left: auto;
  display: flex;
  align-items: center;
  gap: 46px;
  padding-right: 22px;
}
.netmeter {
  position: absolute;
  left: 1666px;
  top: 4px;
  width: 138px;
  height: 49px;
  padding: 0 0 0 4px;
  background: #000;
  color: #e6e6e6;
  font-size: 17.5px;
  letter-spacing: -0.1px;
}
.netmeter div { display: flex; align-items: center; gap: 4px; height: 23px; }

/* toolbar */
.toolbar {
  flex: none;
  height: 50px;
  display: flex;
  align-items: center;
  padding: 1px 0 0 15px;
}
.reload { margin-left: 24px; }
.address {
  width: 1566px;
  height: 40px;
  margin-left: 20px;
  padding: 0 11px 0 1px;
  display: flex;
  align-items: center;
  gap: 21px;
  background: #fff;
  border: 1px solid #cdcdcd;
  border-radius: 20px;
}
.lock {
  width: 34px;
  height: 34px;
  display: flex;
  align-items: center;
  justify-content: center;
  padding-bottom: 2px;
  background: #f5f5f5;
  border-radius: 50%;
}
.url {
  flex: 1;
  margin-left: -12px;
  font-size: 17.3px;
  letter-spacing: -0.25px;
  color: #000;
}
.url span { color: #6b6b6b; }
.ext { margin-left: 21px; }
.vline { width: 1px; height: 21px; margin-left: 16px; background: #cfcfcf; }
.favs { margin-left: 15px; }
.avatar { margin-left: 20px; }
.more { margin-left: 24px; }
.copilot { margin-left: 24px; }

/* bookmarks */
.bookmarks {
  flex: none;
  height: 40px;
  display: flex;
  align-items: center;
  padding-bottom: 3px;
}
.bm-first {
  width: 50px;
  height: 20px;
  margin-right: 14px;
  padding: 3px 0 0 12px;
  border-right: 1px solid #d2d2d2;
}
.bm { width: 196.2px; display: flex; align-items: center; white-space: nowrap; }
.bm span { margin-left: 7px; font-size: 14.5px; letter-spacing: -0.08px; }
.bm.cut span { letter-spacing: 0.08px; }
.bm.maps { width: 86px; }
.bm.globe { width: 183px; }
.bi { width: 22px; height: 22px; }
.bm-more { width: 48px; height: 20px; border-right: 1px solid #d2d2d2; padding: 2px 0 0 15px; }
.bm.other { width: 147px; padding-left: 18px; }

/* web page */
.frame {
  flex: none;
  height: 882px;
  margin: 0 5px 5px;
  display: flex;
  overflow: hidden;
  background: #fff;
  border-radius: 11px;
  box-shadow: 0 0 2px rgba(0, 0, 0, .28);
}
.page {
  width: 1891px;
  padding: 0 22.5px;
  font-family: "Liberation Sans", Arial, sans-serif;
  font-size: 18.33px;
  line-height: 22px;
  text-align: center;
  color: #000;
}
.page p { margin: 18.2px 0; }
.page h1 { margin: 47px 0 0; font-size: 36.7px; line-height: 42px; }
.page .intro { margin: 25px 0 37px; }
.page a { color: #0b78cc; }
.grid {
  display: grid;
  grid-template-columns: repeat(6, 1fr);
  grid-template-rows: 426.700px 427.5px;
  gap: 23.3px 22.5px;
}
.card { border: 1px solid #ddd; border-radius: 9px; padding: 18px 17px; }
.card h2 { margin: 22.4px 0; font-size: 27.45px; line-height: 32px; }
.scrollbar {
  width: 19px;
  display: flex;
  flex-direction: column;
  align-items: center;
  padding: 10px 0 8px;
  background: #fcfcfc;
}
.thumb { width: 11px; height: 313px; margin-top: 9px; border-radius: 6px; background: #8a8a8a; }
.down { margin-top: auto; }

/* taskbar */
.taskbar {
  flex: none;
  height: 60px;
  display: flex;
  background: #202020;
  border-top: 1px solid #3b3f3b;
  color: #fff;
}
.weather { width: 415px; display: flex; padding: 6px 0 0 24px; }
.weather-icon { position: relative; padding-top: 8px; width: 40px; }
.badge {
  position: absolute;
  left: 15px;
  top: 0;
  width: 20px;
  height: 20px;
  border-radius: 50%;
  background: #c92c1f;
  font-size: 13px;
  line-height: 20px;
  text-align: center;
  letter-spacing: -0.5px;
}
.weather-text { display: flex; flex-direction: column; font-size: 14.5px; line-height: 20px; letter-spacing: -0.05px; padding-top: 2px; }
.dim { color: #c4c4c4; }
.apps { display: flex; }
.app { position: relative; width: 55.1px; display: flex; justify-content: center; padding-top: 14px; }
.app svg { width: 30px; height: 30px; }
.run::after {
  content: "";
  position: absolute;
  left: 24px;
  top: 49px;
  width: 8px;
  height: 4px;
  border-radius: 2px;
  background: #9a9a9a;
}
.current::before {
  content: "";
  position: absolute;
  left: 4px;
  top: 4px;
  width: 45px;
  height: 50px;
  border-radius: 5px;
  background: #2f2f2f;
  border: 1px solid #3a3a3a;
  box-shadow: 5px 0 0 -1px #2c2c2c;
}
.current svg { position: relative; }
.current::after {
  content: "";
  position: absolute;
  left: 18px;
  top: 49px;
  width: 20px;
  height: 4px;
  border-radius: 2px;
  background: #4cc2ff;
}
.tray { flex: 1; display: flex; align-items: center; justify-content: flex-end; padding-right: 24px; font-size: 14.5px; line-height: 20px; letter-spacing: 0; }
.t-cloud { margin-left: 23px; }
.t-key { margin-left: 19px; }
.lang { width: 40px; margin-left: 18px; text-align: center; display: flex; flex-direction: column; line-height: 20px; }
.t-wifi { margin-left: 17px; }
.t-vol { margin-left: 10px; }
.t-bat { margin-left: 10px; }
.clock { width: 97px; display: flex; flex-direction: column; text-align: right; letter-spacing: 0.35px; }
```
